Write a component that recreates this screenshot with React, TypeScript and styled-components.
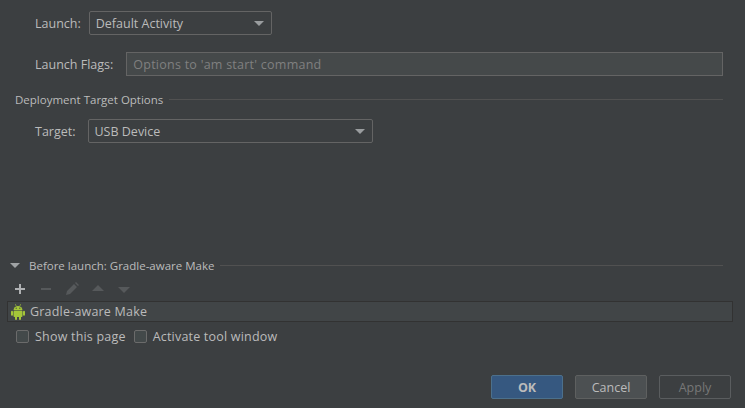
import { createGlobalStyle, styled } from "styled-components";

const GlobalStyle = createGlobalStyle`
  html, body {
    margin: 0;
    height: 100%;
    background: #3c3f41;
  }
  #root {
    height: 100%;
  }
`;

const Page = styled.div`
  width: 745px;
  height: 408px;
  overflow: hidden;
  display: flex;
  flex-direction: column;
  background: #3c3f41;
  color: #bbbbbb;
  font-family: "Open Sans", "Noto Sans", sans-serif;
  font-size: 12.5px;
`;

const Top = styled.div`
  flex: 1;
  display: flex;
  flex-direction: column;
  padding-top: 11px;
`;

const Row = styled.div<{ $gap: number; $mb: number }>`
  display: flex;
  align-items: center;
  height: 24px;
  padding-left: 35px;
  padding-right: 22px;
  gap: ${({ $gap }) => $gap}px;
  margin-bottom: ${({ $mb }) => $mb}px;
`;

const Label = styled.span`
  white-space: nowrap;
`;

const Combo = styled.div<{ $width: number }>`
  box-sizing: border-box;
  width: ${({ $width }) => $width}px;
  height: 24px;
  display: flex;
  align-items: center;
  justify-content: space-between;
  padding: 0 7px 0 6px;
  border: 1px solid #646464;
  border-radius: 2px;
  background: #3c3f41;
`;

const Arrow = styled.span`
  width: 0;
  height: 0;
  border-left: 5px solid transparent;
  border-right: 5px solid transparent;
  border-top: 5px solid #9a9d9f;
  margin-top: 1px;
`;

const TextInput = styled.div`
  box-sizing: border-box;
  flex: 1;
  height: 24px;
  display: flex;
  align-items: center;
  padding-left: 6px;
  border: 1px solid #646464;
  background: #45494a;
  color: #808080;
  letter-spacing: 0.25px;
`;

const SectionTitle = styled.div<{ $left: number; $mb: number }>`
  display: flex;
  align-items: center;
  height: 16px;
  gap: 6px;
  padding-left: ${({ $left }) => $left}px;
  padding-right: 22px;
  margin-bottom: ${({ $mb }) => $mb}px;
  font-size: 11.5px;
  white-space: nowrap;
`;

const Rule = styled.span`
  flex: 1;
  height: 1px;
  background: #515151;
`;

const Expander = styled.span`
  width: 0;
  height: 0;
  border-left: 5px solid transparent;
  border-right: 5px solid transparent;
  border-top: 5px solid #a0a3a5;
  margin-right: 3px;
`;

const Toolbar = styled.div`
  display: flex;
  align-items: center;
  height: 16px;
  padding-left: 12px;
  gap: 10px;
  margin-bottom: 4px;
`;

const ToolIcon = styled.svg<{ $enabled?: boolean }>`
  width: 16px;
  height: 16px;
  fill: ${({ $enabled }) => ($enabled ? "#afb1b3" : "#56595b")};
`;

const TaskList = styled.div`
  box-sizing: border-box;
  height: 21px;
  margin: 0 12px 0 7px;
  display: flex;
  align-items: center;
  gap: 4px;
  padding-left: 2px;
  border: 1px solid #323232;
  background: #414547;
  letter-spacing: 0.2px;
`;

const Checks = styled.div`
  display: flex;
  align-items: center;
  height: 16px;
  padding-left: 16px;
  margin-top: 6px;
`;

const Check = styled.label`
  display: flex;
  align-items: center;
  gap: 6px;
  margin-right: 8px;
  letter-spacing: 0.2px;
`;

const Box = styled.span`
  box-sizing: border-box;
  width: 13px;
  height: 13px;
  border: 1px solid #6b6b6b;
  border-radius: 2px;
  background: #43494a;
`;

const Footer = styled.div`
  display: flex;
  justify-content: flex-end;
  gap: 12px;
  padding: 0 14px 9px 0;
`;

const Button = styled.div<{ $kind?: "default" | "disabled" }>`
  box-sizing: border-box;
  width: 72px;
  height: 24px;
  display: flex;
  align-items: center;
  justify-content: center;
  border-radius: 2px;
  border: 1px solid
    ${({ $kind }) =>
      $kind === "default" ? "#4c708c" : $kind === "disabled" ? "#5a5d5f" : "#5e6060"};
  background: ${({ $kind }) =>
    $kind === "default" ? "#365880" : $kind === "disabled" ? "#3c3f41" : "#4c5052"};
  color: ${({ $kind }) =>
    $kind === "default" ? "#bbbbbb" : $kind === "disabled" ? "#777777" : "#bbbbbb"};
  font-weight: ${({ $kind }) => ($kind === "default" ? 700 : 400)};
`;

const AndroidIcon = () => (
  <svg width="16" height="16" viewBox="0 0 16 16" fill="#a4c639">
    <path d="M3.5 6.2a4.5 4.3 0 0 1 9 0z" />
    <rect x="3.5" y="6.8" width="9" height="6.2" rx="1" />
    <rect x="1" y="6.8" width="2" height="5" rx="1" />
    <rect x="13" y="6.8" width="2" height="5" rx="1" />
    <rect x="5" y="12" width="2" height="4" rx="1" />
    <rect x="9" y="12" width="2" height="4" rx="1" />
    <path d="M5 .3l.5-.3 1 1.9-.5.3zM11 .3l-.5-.3-1 1.9.5.3z" />
    <circle cx="6.2" cy="4.2" r=".6" fill="#3c3f41" />
    <circle cx="9.8" cy="4.2" r=".6" fill="#3c3f41" />
  </svg>
);

export default function App() {
  return (
    <Page>
      <GlobalStyle />
      <Top>
        <Row $gap={8} $mb={17}>
          <Label>Launch:</Label>
          <Combo $width={183}>
            Default Activity
            <Arrow />
          </Combo>
        </Row>
        <Row $gap={13} $mb={15}>
          <Label>Launch Flags:</Label>
          <TextInput>Options to 'am start' command</TextInput>
        </Row>
        <SectionTitle $left={15} $mb={12}>
          Deployment Target Options
          <Rule />
        </SectionTitle>
        <Row $gap={12} $mb={114}>
          <Label>Target:</Label>
          <Combo $width={285}>
            USB Device
            <Arrow />
          </Combo>
        </Row>
        <SectionTitle $left={10} $mb={8}>
          <Expander />
          Before launch: Gradle-aware Make
          <Rule />
        </SectionTitle>
        <Toolbar>
          <ToolIcon $enabled viewBox="0 0 16 16">
            <path d="M7 3h2v4h4v2H9v4H7V9H3V7h4z" />
          </ToolIcon>
          <ToolIcon viewBox="0 0 16 16">
            <rect x="3" y="7" width="10" height="2" />
          </ToolIcon>
          <ToolIcon viewBox="0 0 16 16">
            <path d="M2 14l1-4 7-7 3 3-7 7zM11 2l1-1 3 3-1 1z" />
          </ToolIcon>
          <ToolIcon viewBox="0 0 16 16">
            <path d="M8 4l6 6H2z" />
          </ToolIcon>
          <ToolIcon viewBox="0 0 16 16">
            <path d="M2 6h12l-6 6z" />
          </ToolIcon>
        </Toolbar>
        <TaskList>
          <AndroidIcon />
          Gradle-aware Make
        </TaskList>
        <Checks>
          <Check>
            <Box />
            Show this page
          </Check>
          <Check>
            <Box />
            Activate tool window
          </Check>
        </Checks>
      </Top>
      <Footer>
        <Button $kind="default">OK</Button>
        <Button>Cancel</Button>
        <Button $kind="disabled">Apply</Button>
      </Footer>
    </Page>
  );
}
